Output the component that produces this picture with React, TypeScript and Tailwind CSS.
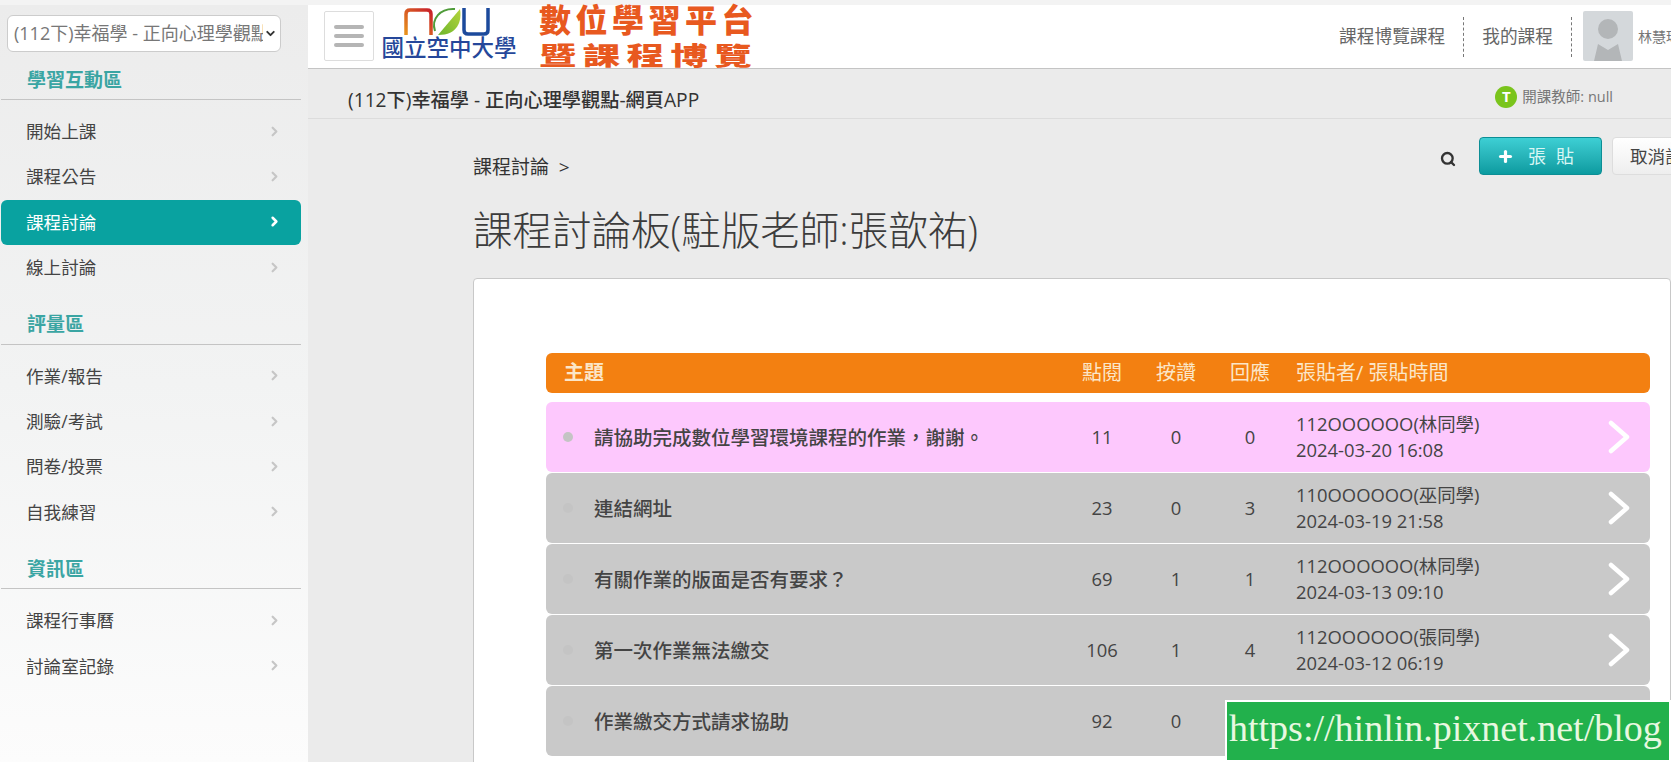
import { ChevronRight, ChevronDown, Plus, Search } from 'lucide-react'

const font = "font-['Open_Sans','Noto_Sans_CJK_TC',sans-serif]"

const sections = [
  { title: '學習互動區', items: ['開始上課', '課程公告', '課程討論', '線上討論'] },
  { title: '評量區', items: ['作業/報告', '測驗/考試', '問卷/投票', '自我練習'] },
  { title: '資訊區', items: ['課程行事曆', '討論室記錄'] },
]

const topics = [
  { title: '請協助完成數位學習環境課程的作業，謝謝。', views: 11, likes: 0, replies: 0, who: '112OOOOOO(林同學)', time: '2024-03-20 16:08', hot: true },
  { title: '連結網址', views: 23, likes: 0, replies: 3, who: '110OOOOOO(巫同學)', time: '2024-03-19 21:58' },
  { title: '有關作業的版面是否有要求？', views: 69, likes: 1, replies: 1, who: '112OOOOOO(林同學)', time: '2024-03-13 09:10' },
  { title: '第一次作業無法繳交', views: 106, likes: 1, replies: 4, who: '112OOOOOO(張同學)', time: '2024-03-12 06:19' },
  { title: '作業繳交方式請求協助', views: 92, likes: 0, replies: 0, who: '', time: '' },
]

function Sidebar() {
  return (
    <aside className="w-[308px] shrink-0 bg-gradient-to-b from-[#ececec] via-[#f2f3f3] to-[#fcfcfc] pt-[10px]">
      <div className="mx-[7px] w-[274px] h-[37px] flex items-center bg-white border border-[#ccc] rounded-md pl-[6px] pr-[3px] overflow-hidden">
        <span className="text-[18px] text-[#777] whitespace-nowrap overflow-hidden flex-1">(112下)幸福學 - 正向心理學觀點-網頁APP</span>
        <ChevronDown size={13} strokeWidth={3.5} className="shrink-0 text-[#333] ml-px" />
      </div>
      {sections.map((s, i) => (
        <div key={s.title} className={i === 0 ? 'mt-[7px]' : 'mt-[13px]'}>
          <div className="pl-[27px] h-[40px] pt-[2px] flex items-center text-[19px] font-bold text-[#3aa5a3]">{s.title}</div>
          <div className="ml-px w-[300px] border-t border-[#c4c4c4] mb-[9px]" />
          {s.items.map(item => {
            const active = item === '課程討論'
            return (
              <div
                key={item}
                className={
                  active
                    ? 'ml-px w-[300px] h-[45.4px] flex items-center justify-between pl-[25px] pr-[19px] pb-px rounded-md bg-[#09a2a0] text-white text-[17.6px]'
                    : 'ml-px w-[300px] h-[45.4px] flex items-center justify-between pl-[25px] pr-[19px] pb-px text-[#444] text-[17.6px]'
                }
              >
                <span>{item}</span>
                <ChevronRight size={15} strokeWidth={active ? 4 : 3.5} className={active ? 'text-white' : 'text-[#c6c6c6]'} />
              </div>
            )
          })}
        </div>
      ))}
    </aside>
  )
}

function Logo() {
  return (
    <div className="ml-[8px] w-[134px] flex flex-col items-center">
      <svg width="86" height="29" viewBox="0 0 86 29" className="mt-[2px] -ml-[4px]">
        <defs>
          <linearGradient id="arch" x1="0" x2="1" y1="1" y2="0">
            <stop offset="0" stopColor="#e8941c" />
            <stop offset="1" stopColor="#c8202a" />
          </linearGradient>
          <linearGradient id="leaf" x1="0" x2="1" y1="1" y2="0">
            <stop offset="0" stopColor="#6cb52c" />
            <stop offset="1" stopColor="#b5d43c" />
          </linearGradient>
        </defs>
        <path d="M2 28V7Q2 3 6 3H23Q27 3 27 7V28" fill="none" stroke="url(#arch)" strokeWidth="3.5" />
        <path d="M34 28L56 2C58 14 54 28 34 28Z" fill="url(#leaf)" />
        <path d="M31 24C27 12 36 1 51 2" fill="none" stroke="#4f9c3a" strokeWidth="2" />
        <path d="M60 1V23Q60 27 64 27H80Q84 27 84 23V1" fill="none" stroke="#1c4a9c" strokeWidth="3.5" />
      </svg>
      <div className="text-[22.5px] leading-[24px] font-medium text-[#25479a] whitespace-nowrap">國立空中大學</div>
    </div>
  )
}

function Header() {
  return (
    <header className="h-[64px] bg-white border-b border-[#c4c4c4] flex items-start shrink-0">
      <button className="ml-[16px] mt-[6px] w-[50px] h-[50px] flex flex-col items-center justify-center gap-[5px] border border-[#ddd] rounded-[2px]">
        <span className="w-[30px] h-[4px] rounded-sm bg-[#b5b5b5]" />
        <span className="w-[30px] h-[4px] rounded-sm bg-[#b5b5b5]" />
        <span className="w-[30px] h-[4px] rounded-sm bg-[#b5b5b5]" />
      </button>
      <Logo />
      <div className="ml-[23px] w-[220px] text-[#e8591f] font-black">
        <div className="text-[32px] leading-[30px] tracking-[4.5px] whitespace-nowrap">數位學習平台</div>
        <div className="text-[25px] leading-[28px] tracking-[4.2px] whitespace-nowrap origin-left scale-x-150 mt-[6px]">暨課程博覽</div>
      </div>
      <nav className="ml-auto flex items-center h-full text-[17.7px] text-[#666]">
        <span className="pr-[18px]">課程博覽課程</span>
        <span className="h-[40px] border-l border-dashed border-[#777]" />
        <span className="px-[18px]">我的課程</span>
        <span className="h-[40px] border-l border-dashed border-[#777]" />
        <div className="ml-[11px] w-[50px] h-[50px] mb-[2px] bg-[#d4d8db] rounded-[2px] overflow-hidden flex flex-col items-center shrink-0">
          <span className="mt-[8px] w-[20px] h-[20px] rounded-full bg-[#b3b6b8]" />
          <svg width="34" height="22" viewBox="0 0 34 22">
            <path d="M3 22L7 5 17 11 27 5 31 22Z" fill="#b3b6b8" />
          </svg>
        </div>
        <span className="ml-[5px] w-[33px] overflow-hidden whitespace-nowrap text-[14px] text-[#777]">林慧珺</span>
      </nav>
    </header>
  )
}

function TopicRow({ t }: { t: (typeof topics)[number] }) {
  return (
    <div className={`grid grid-cols-[519px_74px_74px_74px_1fr] items-center h-[70px] mb-px rounded-md text-[#444] text-[18.4px] ${t.hot ? 'bg-[#fdc8fd]' : 'bg-[#c9c9c9]'}`}>
      <div className="flex items-center">
        <span className="ml-[17px] w-[10px] h-[10px] rounded-full bg-[#c4c4c4]" />
        <span className="ml-[21px] text-[19.5px] font-medium whitespace-nowrap font-['Noto_Sans_CJK_TC',sans-serif]">{t.title}</span>
      </div>
      <div className="text-center">{t.views}</div>
      <div className="text-center">{t.likes}</div>
      <div className="text-center">{t.replies}</div>
      <div className="flex items-center justify-between pl-[9px] pr-[19px]">
        <div className="leading-[26px]">
          <div>{t.who}</div>
          <div>{t.time}</div>
        </div>
        <svg width="24" height="34" viewBox="0 0 24 34" className="shrink-0">
          <path d="M4 3L20 17 4 31" fill="none" stroke="#fff" strokeWidth="4.5" strokeLinecap="round" strokeLinejoin="round" />
        </svg>
      </div>
    </div>
  )
}

export default function App() {
  return (
    <div lang="zh-TW" className={`relative w-[1671px] h-[762px] overflow-hidden flex flex-col bg-[#f0f0f0] ${font}`}>
      <div className="h-[5px] shrink-0 bg-[#f3f3f3]" />
      <div className="flex flex-1 min-h-0">
        <Sidebar />
        <div className="flex-1 min-w-0 flex flex-col bg-[#ebebeb]">
          <Header />
          <div className="h-[50px] shrink-0 border-b border-[#dcdcdc] flex items-center pl-[40px] pr-[58px] pt-[6px]">
            <span className="mt-[8px] text-[19.2px] font-medium text-[#333]">(112下)幸福學 - 正向心理學觀點-網頁APP</span>
            <span className="ml-auto w-[22px] h-[22px] rounded-full bg-[#7ac41c] text-white text-[15px] font-bold flex items-center justify-center">T</span>
            <span className="ml-[5px] text-[14.5px] text-[#777]">開課教師: null</span>
          </div>
          <main className="pl-[165px] flex-1 min-h-0">
            <div className="flex items-start h-[86px]">
              <span className="mt-[34px] text-[19px] text-[#333]">課程討論 &nbsp;&gt;</span>
              <Search size={16} strokeWidth={3.5} className="ml-auto mt-[32px] text-[#333]" />
              <button className="ml-[23px] mt-[18px] w-[123px] h-[38px] shrink-0 flex items-center justify-center gap-[14px] rounded-[4px] border border-[#0c8e95] bg-gradient-to-b from-[#3dcfd4] to-[#0a9ba0] text-[#d8f6f4] text-[18px] tracking-[10px]">
                <Plus size={17} strokeWidth={4.5} className="text-white" />
                <span>張貼</span>
              </button>
              <button className="ml-[10px] mt-[18px] w-[100px] h-[38px] shrink-0 -mr-[41px] pl-[17px] text-left rounded-[4px] border border-[#ddd] bg-gradient-to-b from-white to-[#eee] text-[#444] text-[17.6px] whitespace-nowrap overflow-hidden">取消訂閱</button>
            </div>
            <h1 className="text-[39.5px] leading-[50px] font-light text-[#3c3c3c] whitespace-nowrap">課程討論板(駐版老師:張歆祐)</h1>
            <div className="mt-[23px] h-[500px] bg-white border border-[#c8c8c8] rounded-t-[4px] pt-[74px] pl-[72px] pr-[20px]">
              <div className="grid grid-cols-[519px_74px_74px_74px_1fr] items-center h-[40px] mb-[9px] rounded-md bg-[#f38011] text-[#fbe6c8] text-[20px]">
                <div className="pl-[18px] font-bold">主題</div>
                <div className="text-center">點閱</div>
                <div className="text-center">按讚</div>
                <div className="text-center">回應</div>
                <div className="pl-[9px]">張貼者/ 張貼時間</div>
              </div>
              {topics.map(t => <TopicRow key={t.title} t={t} />)}
            </div>
          </main>
        </div>
      </div>
      <div className="absolute right-0 bottom-0 w-[446px] h-[62px] bg-[#22b14c] border-[2px] border-white flex items-center pl-[2px] pb-[6px] text-[#e8f8e0] text-[38px] font-['Liberation_Serif',serif] whitespace-nowrap overflow-hidden">
        https://hinlin.pixnet.net/blog
      </div>
    </div>
  )
}
